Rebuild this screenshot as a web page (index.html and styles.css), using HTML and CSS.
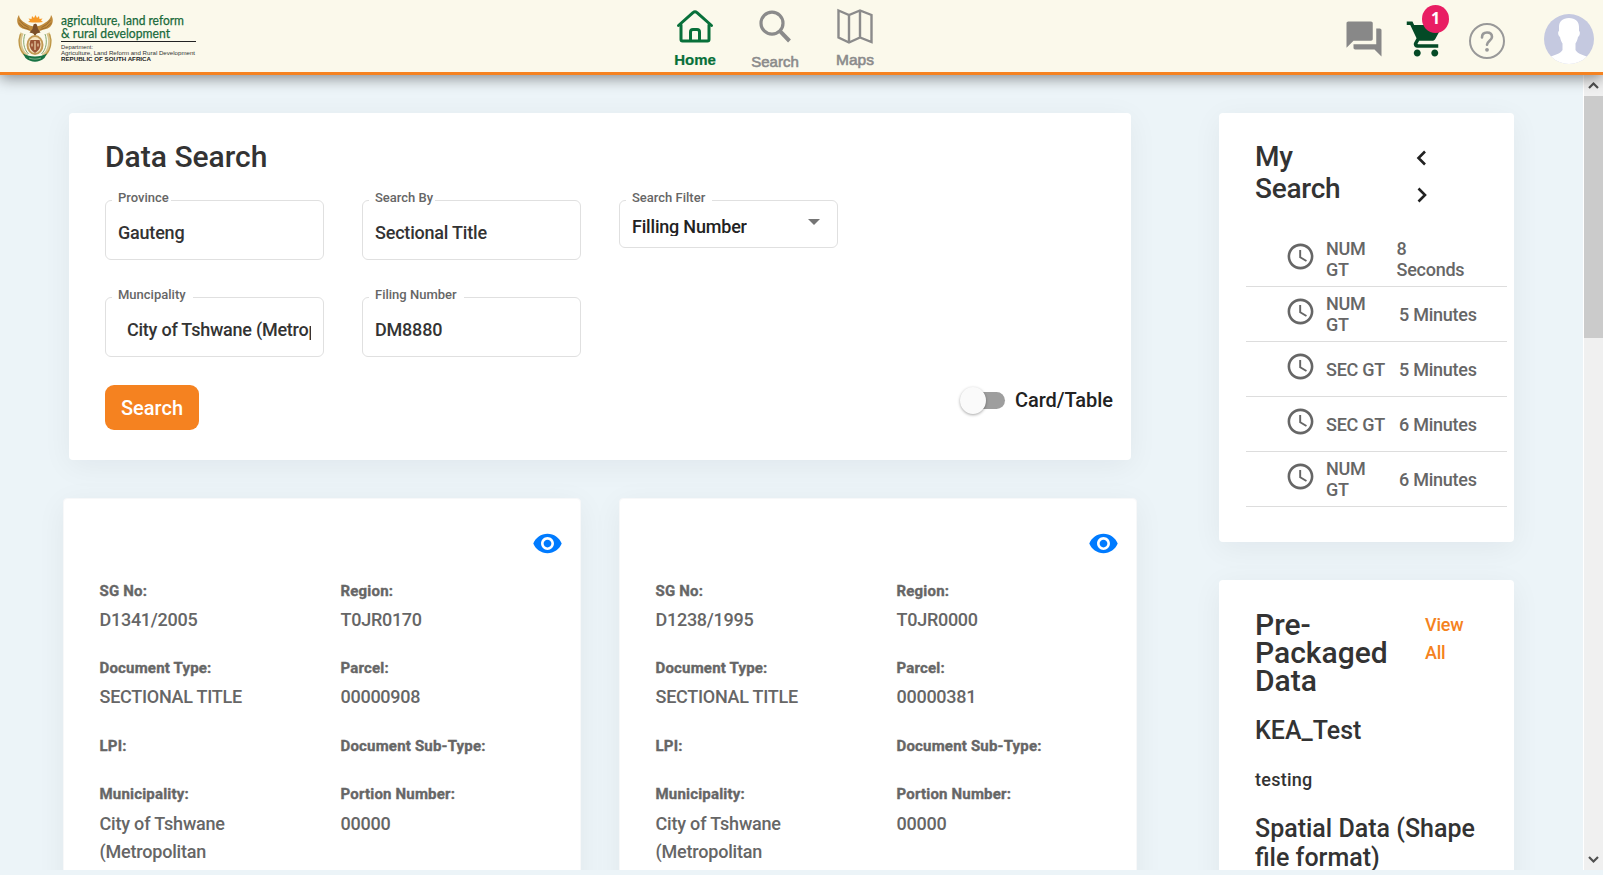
FILE: index.html
```html
<!DOCTYPE html>
<html lang="en">
<head>
<meta charset="utf-8">
<title>Data Search</title>
<link rel="stylesheet" href="styles.css">
</head>
<body>
<svg class="defs" width="0" height="0">
  <symbol id="clock" viewBox="0 0 24 24"><path d="M11.99 2C6.47 2 2 6.48 2 12s4.47 10 9.99 10C17.52 22 22 17.52 22 12S17.52 2 11.99 2zM12 20c-4.42 0-8-3.58-8-8s3.58-8 8-8 8 3.58 8 8-3.58 8-8 8z"/><path d="M12.5 7H11v6l5.25 3.15.75-1.23-4.5-2.67z"/></symbol>
  <symbol id="eye" viewBox="0 0 24 24"><path d="M12 4.5C7 4.500 2.730 7.610 1 12c1.730 4.390 6 7.500 11 7.500s9.270-3.110 11-7.500c-1.730-4.390-6-7.500-11-7.500zM12 17c-2.760 0-5-2.240-5-5s2.240-5 5-5 5 2.240 5 5-2.240 5-5 5zm0-8c-1.660 0-3 1.340-3 3s1.340 3 3 3 3-1.340 3-3-1.340-3-3-3z"/></symbol>
</svg>

<header class="topbar">
  <svg class="logo" width="200" height="72" viewBox="0 0 200 72">
    <g class="emblem">
      <path d="M28 22l2-1.500-1.500-2 3 .5.5-3 2 2 1.500-3 1.500 3 2-2 .5 3 3-.5-1.500 2 2 1.500-4 .5h-7z" fill="#f79a28"/>
      <path d="M19 15c-3 4-2 9 1 12 3 2.500 7 2 10 4l5 4 5-4c3-2 7-1.500 10-4 3-3 4-8 1-12-.5 4-3 6-7 8.500-3 2-6 3-9 3s-6-1-9-3c-4-2.500-6.500-4.500-7-8.500z" fill="#c08b3c"/>
      <path d="M19.500 20l4 4.500 5 3M18.500 23l5 4.500 6 2M50.500 20l-4 4.500-5 3M51.500 23l-5 4.500-6 2" fill="none" stroke="#94672e" stroke-width=".9"/>
      <path d="M33.500 24.500c1-1 3-1 3.500.5l1 4 2.500 3.500-4 1-1.500 3-1.500-3-4-1 3-3.500z" fill="#7a4e2a"/>
      <path d="M22 33c-3.500 8-2 18 5 23M48 33c3.500 8 2 18-5 23" fill="none" stroke="#d8c48c" stroke-width="3.400"/>
      <path d="M20.500 34c-3 8-1 16 4 21M49.500 34c3 8 1 16-4 21" fill="none" stroke="#bd9443" stroke-width="1.100"/>
      <path d="M25 34c-2.500 7-1.500 15 3.500 20M45 34c2.500 7 1.500 15-3.500 20" fill="none" stroke="#799d62" stroke-width=".9"/>
      <ellipse cx="35" cy="45" rx="8.500" ry="10" fill="#c39a55"/>
      <ellipse cx="35" cy="45" rx="6.500" ry="8" fill="#f6e6c2"/>
      <path d="M30.500 40h9l1 4c0 4-2 7-5.500 9-3.500-2-5.500-5-5.500-9z" fill="#9a5536"/>
      <path d="M35 41v9M32 43.500v3M38 43.500v3" fill="none" stroke="#f3dfb5" stroke-width="1.100"/>
      <path d="M23 53.500c7 4 17 4 24 0l-2.500 4.500c-6 5-13 5-19 0z" fill="#187344"/>
      <path d="M29 58c4 1.500 8 1.500 12 0" fill="none" stroke="#a8c8a5" stroke-width=".7"/>
    </g>
    <text class="logo-name" x="61" y="25" textLength="123" lengthAdjust="spacingAndGlyphs">agriculture, land reform</text>
    <text class="logo-name" x="61" y="37.500" textLength="109" lengthAdjust="spacingAndGlyphs">&amp; rural development</text>
    <path d="M61 41.500h135" stroke="#222" stroke-width="1"/>
    <text class="logo-small" x="61" y="48.500" textLength="32" lengthAdjust="spacingAndGlyphs">Department:</text>
    <text class="logo-small" x="61" y="55" textLength="134" lengthAdjust="spacingAndGlyphs">Agriculture, Land Reform and Rural Development</text>
    <text class="logo-small logo-bold" x="61" y="61.200" textLength="90" lengthAdjust="spacingAndGlyphs">REPUBLIC OF SOUTH AFRICA</text>
  </svg>
  <nav class="nav">
    <a class="nav-item active">
      <svg width="40" height="36" viewBox="0 0 40 36"><g fill="none" stroke="currentColor" stroke-width="3" stroke-linecap="round" stroke-linejoin="round"><path d="M3.500 17.500L18 4.600Q20 3 22 4.600L36.500 17.500"/><path d="M6 17v14.500Q6 33 7.500 33h25Q34 33 34 31.500V17"/><path d="M15.500 32.500V24Q15.500 21.500 18 21.500h4Q24.500 21.500 24.500 24v8.500"/></g></svg>
      <span>Home</span>
    </a>
    <a class="nav-item nav-search">
      <svg width="40" height="36" viewBox="0 0 40 36"><g fill="none" stroke="currentColor" stroke-width="3.200"><circle cx="17" cy="15.200" r="11"/><path d="M25 23.200L34.500 33" stroke-width="4"/></g></svg>
      <span>Search</span>
    </a>
    <a class="nav-item nav-maps">
      <svg width="40" height="36" viewBox="0 0 40 36"><path d="M3.500 2.500L14 7 25 2.500 36.500 7v27L25 29.500 14 34.500 3.500 29.500zM14 7v27M25 3v26" fill="none" stroke="currentColor" stroke-width="2.400"/></svg>
      <span>Maps</span>
    </a>
  </nav>
  <div class="actions">
    <svg class="forum" width="42" height="42" viewBox="0 0 24 24"><path fill="#888" d="M21 6h-2v9H6v2c0 .55.45 1 1 1h11l4 4V7c0-.55-.45-1-1-1zm-4 6V3c0-.55-.45-1-1-1H3c-.55 0-1 .45-1 1v14l4-4h10c.55 0 1-.45 1-1z"/></svg>
    <div class="cart">
      <svg width="42" height="42" viewBox="0 0 24 24"><path fill="#044a26" d="M7 18c-1.100 0-1.990.9-1.990 2S5.900 22 7 22s2-.9 2-2-.9-2-2-2zM1 2v2h2l3.600 7.590-1.350 2.450c-.16.280-.25.610-.25.960 0 1.100.9 2 2 2h12v-2H7.420c-.14 0-.25-.11-.25-.25l.03-.12.900-1.630h7.450c.75 0 1.410-.41 1.750-1.030l3.580-6.490c.08-.14.120-.31.120-.48 0-.55-.45-1-1-1H5.210l-.94-2H1zm16 16c-1.100 0-1.990.9-1.990 2s.89 2 1.990 2 2-.9 2-2-.9-2-2-2z"/></svg>
      <span class="badge">1</span>
    </div>
    <svg class="help" width="38" height="38" viewBox="0 0 38 38"><g fill="none" stroke="#999"><circle cx="19" cy="19" r="17" stroke-width="2"/><path d="M14 15.500C14 12 16 10.500 19 10.500s5 1.800 5 4.500c0 3.500-5 4-5 7.800" stroke-width="2.600" stroke-linecap="round"/></g><circle cx="19" cy="27.800" r="1.900" fill="#999"/></svg>
    <svg class="avatar" width="50" height="50" viewBox="0 0 50 50"><defs><clipPath id="round"><circle cx="25" cy="25" r="25"/></clipPath></defs><g clip-path="url(#round)"><rect width="50" height="50" fill="#c5c9e0"/><path fill="#fff" d="M25 4c6.500 0 10 3.500 10 9v4c1.500.5 1 5-1 6-.5 3-1.500 5-2.500 6.500V36c2 4 8 5 13 7.500v8H5v-8C10 41 16.500 40 18.500 36v-6.500c-1-1.500-2-3.500-2.500-6.500-2-1-2.500-5.500-1-6v-4c0-5.500 3.500-9 10-9z"/></g></svg>
  </div>
</header>

<div class="viewport">
  <main class="page">
    <section class="results">
      <div class="card search-card">
        <h1>Data Search</h1>
        <div class="fields">
          <div class="field"><label class="snug">Province</label><div class="value">Gauteng</div></div>
          <div class="field"><label class="snug">Search By</label><div class="value">Sectional Title</div></div>
          <div class="field select"><label>Search Filter</label><div class="value">Filling Number</div><i class="caret"></i></div>
          <div class="field"><label>Muncipality</label><div class="value indent">City of Tshwane (Metropolitan</div></div>
          <div class="field"><label>Filing Number</label><div class="value">DM8880</div></div>
        </div>
        <div class="form-foot">
          <button class="search-btn">Search</button>
          <div class="toggle"><span class="track"><span class="thumb"></span></span><span>Card/Table</span></div>
        </div>
      </div>
      <div class="cards">
        <article class="card record">
          <svg class="eye" width="31" height="31"><use href="#eye"/></svg>
          <dl>
            <div><dt>SG No:</dt><dd>D1341/2005</dd></div>
            <div><dt>Region:</dt><dd>T0JR0170</dd></div>
            <div><dt>Document Type:</dt><dd>SECTIONAL TITLE</dd></div>
            <div><dt>Parcel:</dt><dd>00000908</dd></div>
            <div><dt>LPI:</dt></div>
            <div><dt>Document Sub-Type:</dt></div>
            <div><dt>Municipality:</dt><dd>City of Tshwane (Metropolitan</dd></div>
            <div><dt>Portion Number:</dt><dd>00000</dd></div>
          </dl>
        </article>
        <article class="card record">
          <svg class="eye" width="31" height="31"><use href="#eye"/></svg>
          <dl>
            <div><dt>SG No:</dt><dd>D1238/1995</dd></div>
            <div><dt>Region:</dt><dd>T0JR0000</dd></div>
            <div><dt>Document Type:</dt><dd>SECTIONAL TITLE</dd></div>
            <div><dt>Parcel:</dt><dd>00000381</dd></div>
            <div><dt>LPI:</dt></div>
            <div><dt>Document Sub-Type:</dt></div>
            <div><dt>Municipality:</dt><dd>City of Tshwane (Metropolitan</dd></div>
            <div><dt>Portion Number:</dt><dd>00000</dd></div>
          </dl>
        </article>
      </div>
    </section>
    <aside class="side">
      <div class="card history">
        <div class="history-head">
          <h2>My Search</h2>
          <div class="arrows">
            <svg width="12" height="16" viewBox="0 0 12 16"><path d="M9 1.500L2.500 8 9 14.500" fill="none" stroke="#222" stroke-width="2.600"/></svg>
            <svg width="12" height="16" viewBox="0 0 12 16"><path d="M2.500 1.500L9 8l-6.500 6.500" fill="none" stroke="#222" stroke-width="2.600"/></svg>
          </div>
        </div>
        <ul>
          <li><svg width="31" height="31"><use href="#clock"/></svg><span class="what">NUM GT</span><span class="when wrap">8 Seconds</span></li>
          <li><svg width="31" height="31"><use href="#clock"/></svg><span class="what">NUM GT</span><span class="when">5 Minutes</span></li>
          <li><svg width="31" height="31"><use href="#clock"/></svg><span class="what">SEC GT</span><span class="when">5 Minutes</span></li>
          <li><svg width="31" height="31"><use href="#clock"/></svg><span class="what">SEC GT</span><span class="when">6 Minutes</span></li>
          <li><svg width="31" height="31"><use href="#clock"/></svg><span class="what">NUM GT</span><span class="when">6 Minutes</span></li>
        </ul>
      </div>
      <div class="card packs">
        <div class="packs-head"><h2>Pre-Packaged Data</h2><a>View All</a></div>
        <h3>KEA_Test</h3>
        <p>testing</p>
        <h3>Spatial Data (Shape file format)</h3>
      </div>
    </aside>
  </main>
  <div class="scrollbar">
    <svg width="19" height="21" viewBox="0 0 19 21"><path d="M5 13l4.500-4.500L14 13" fill="none" stroke="#505050" stroke-width="2.200"/></svg>
    <div class="scroll-thumb"></div>
    <svg class="down" width="19" height="21" viewBox="0 0 19 21"><path d="M5 8l4.500 4.500L14 8" fill="none" stroke="#505050" stroke-width="2.200"/></svg>
  </div>
</div>
</body>
</html>
```
FILE: styles.css
```css
* { box-sizing: border-box; }
body {
  margin: 0;
  height: 875px;
  overflow: hidden;
  background: #ecf4f8;
  font-family: Roboto, "Liberation Sans", sans-serif;
  font-weight: 500;
  color: #333;
}
h1, h2, h3, p, ul, dl, dd { margin: 0; padding: 0; font-weight: 500; }
.defs { position: absolute; }

.topbar {
  position: relative;
  z-index: 2;
  display: grid;
  grid-template-columns: 655px 240px 1fr;
  height: 75px;
  background: #fbf9eb;
  border-bottom: 3px solid #f58220;
  box-shadow: 0 3px 14px rgba(0, 0, 0, .45);
}
.logo { overflow: visible; }
.logo-name { font: 13.500px Lato, sans-serif; fill: #18693a; stroke: #18693a; stroke-width: .25px; }
.logo-small { font: 6.200px "Liberation Sans", sans-serif; fill: #333; }
.logo-bold { font-weight: bold; fill: #222; }
.nav { display: grid; grid-template-columns: repeat(3, 80px); }
.nav-item {
  display: flex;
  flex-direction: column;
  align-items: center;
  padding-top: 8px;
  font: 15px/18px "Liberation Sans", sans-serif;
  color: #8b8b8b;
  -webkit-text-stroke: .6px;
}
.nav-item span { margin-top: 7px; }
.nav-item.active { color: #08703a; font-weight: bold; -webkit-text-stroke: .2px; }
.nav-search span { margin-top: 9px; }
.nav-maps { font-size: 15.500px; }
.actions { display: flex; justify-content: flex-end; align-items: flex-start; padding-right: 9px; }
.forum { margin: 18px 20px 0 0; }
.cart { position: relative; width: 42px; height: 42px; margin: 18px 21px 0 0; }
.badge {
  position: absolute;
  left: 17px;
  top: -13px;
  width: 27px;
  height: 28px;
  border-radius: 50%;
  background: #e91e63;
  color: #fff;
  font: bold 16px/27px "Noto Sans", sans-serif;
  text-align: center;
}
.help { margin: 22px 38px 0 0; }
.avatar { margin-top: 14px; }

.viewport { display: flex; height: 795px; overflow: hidden; }
.page { display: flex; width: 1584px; padding: 38px 0 0 63px; gap: 82px; background: #ecf4f8; border-right: 1px solid #fff; }
.card { background: #fff; border-radius: 4px; box-shadow: 0 6px 30px rgba(0, 20, 30, .055); }
.results { width: 1074px; }
.search-card { height: 347px; margin: 0 6px 38px; padding: 26px 18px 0 36px; }
h1 { font-size: 30px; line-height: 36px; }

.fields { display: grid; grid-template-columns: repeat(3, 219px); grid-auto-rows: 60px; gap: 37px 38px; margin-top: 25px; }
.field { position: relative; height: 60px; padding: 21px 12px 0; border: 1px solid #e0e0e0; border-radius: 6px; }
.field label {
  position: absolute;
  top: -11px;
  left: 6px;
  padding: 0 7px 0 6px;
  background: #fff;
  font-size: 13px;
  line-height: 16px;
  color: #666;
  white-space: nowrap;
}
.field label.snug { padding-right: 2px; }
.value { overflow: hidden; font-size: 18px; line-height: 22px; letter-spacing: -.2px; white-space: nowrap; }
.indent { text-indent: 9px; letter-spacing: -.24px; }
.select { display: flex; justify-content: space-between; height: 48px; padding: 15px 17px 0 12px; }
.select .value { height: 20px; color: #222; }
.caret { margin-top: 3px; width: 0; height: 0; border: 6px solid transparent; border-top-color: #757575; border-bottom: 0; }

.form-foot { display: flex; justify-content: space-between; margin-top: 28px; }
.search-btn {
  width: 94px;
  height: 45px;
  padding: 1px 0 0;
  border: 0;
  border-radius: 9px;
  background: #f58220;
  color: #fff;
  font: 500 20px/44px Roboto, sans-serif;
}
.toggle { display: flex; align-items: center; height: 30px; gap: 10px; font-size: 20px; color: #222; letter-spacing: -.05px; }
.track { position: relative; width: 43px; height: 17px; border-radius: 9px; background: #9e9e9e; }
.thumb {
  position: absolute;
  left: -2px;
  top: -5px;
  width: 26px;
  height: 27px;
  border-radius: 50%;
  background: #fafafa;
  box-shadow: 0 1px 3px rgba(0, 0, 0, .35);
}

.cards { display: grid; grid-template-columns: 518px 518px; gap: 38px; }
.record { display: flex; flex-direction: column; height: 420px; padding: 29px 17px 0 35.500px; border: 1px solid #f7f8f9; }
.eye { align-self: flex-end; fill: #007bff; }
dl { display: grid; grid-template-columns: 241px 200px; grid-template-rows: 77px 78px 48px auto; margin-top: 21px; color: #666; }
dl div { width: 165px; }
dt { font-size: 15px; line-height: 22px; font-weight: 700; letter-spacing: .19px; -webkit-text-stroke: .35px; white-space: nowrap; }
dd { margin-top: 4px; font-size: 18px; line-height: 28px; letter-spacing: -.27px; }
dl div:nth-child(n+7) dd { margin-top: 5px; letter-spacing: -.2px; }

.side { width: 295px; }
.history { height: 429px; padding: 28px 7px 0 27px; margin-bottom: 38px; }
.history-head { display: flex; padding-left: 9px; }
.history h2 { width: 161px; padding-right: 60px; font-size: 28px; line-height: 32px; letter-spacing: -.25px; }
.arrows { display: flex; flex-direction: column; gap: 21px; padding-top: 9px; }
.history ul { list-style: none; margin-top: 27px; color: #666; font-size: 18px; line-height: 21px; letter-spacing: -.25px; }
.history li { display: flex; align-items: center; height: 55px; border-bottom: 1px solid #ddd; }
.history li svg { flex: none; margin: 0 10px 5px 39px; fill: #666; }
.what { flex: none; width: 73px; padding-right: 10px; }
.when { white-space: nowrap; }
.when.wrap { width: 75px; margin-left: -2.500px; white-space: normal; }

.packs { height: 400px; padding: 31px 36px 0; }
.packs-head { display: flex; }
.packs h2 { width: 170px; padding-right: 30px; font-size: 30px; line-height: 28.200px; }
.packs a { width: 50px; font-size: 18px; line-height: 28px; letter-spacing: -.2px; color: #f58220; }
.packs h3 { margin-top: 20px; font-size: 25px; line-height: 29px; }
.packs p { margin-top: 24px; font-size: 18px; line-height: 22px; letter-spacing: .25px; }
.packs p + h3 { margin-top: 23px; }

.scrollbar { display: flex; flex-direction: column; width: 19px; background: #f0f0f0; }
.scroll-thumb { height: 242px; background: #cbcbcb; }
.down { margin-top: auto; }
```
